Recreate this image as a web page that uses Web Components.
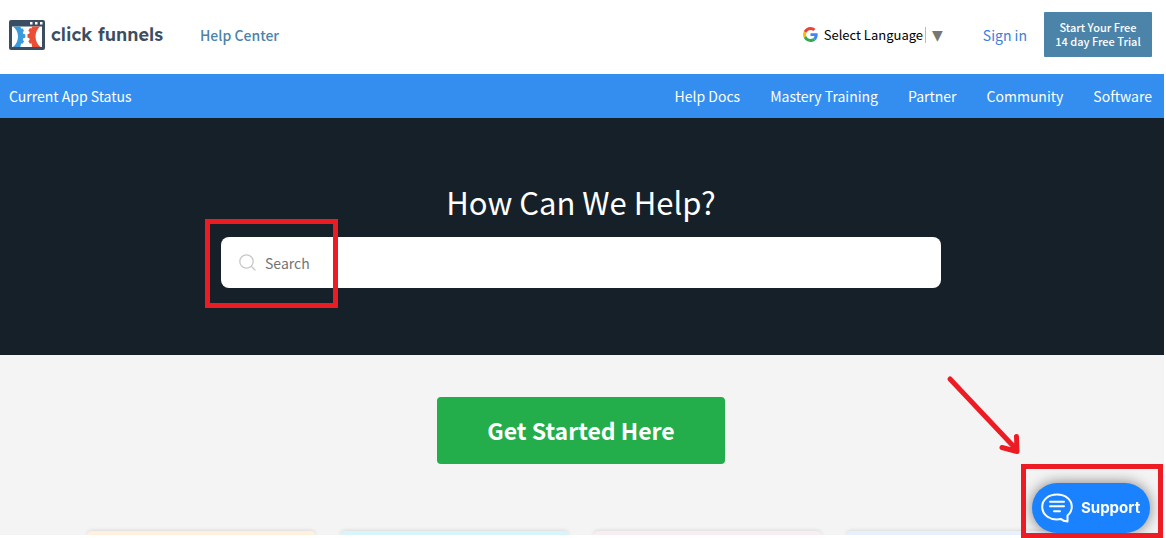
<!DOCTYPE html>
<html lang="en">
<head>
<meta charset="utf-8">
<title>ClickFunnels Help Center</title>
<style>
html, body { margin: 0; background: #fff; }
body { font-family: "Noto Sans CJK SC", "Noto Sans", sans-serif; }
</style>
</head>
<body>
<help-page></help-page>
<script>
const define = (name, html) => customElements.define(name, class extends HTMLElement {
  constructor() {
    super();
    const t = document.createElement('template');
    t.innerHTML = html;
    this.attachShadow({ mode: 'open' }).append(t.content.cloneNode(true));
  }
});

define('brand-logo', `
<style>
:host { display: block; }
a { display: flex; align-items: center; gap: 6px; color: #3b4d61; text-decoration: none; font: 600 18px/24px Lexend, Quicksand, Inter, sans-serif; }
svg { display: block; }
</style>
<a href="#">
<svg width="36" height="30" viewBox="0 0 36 30" aria-hidden="true">
<rect width="36" height="30" rx="2" fill="#3b4d61"/>
<path d="M3 6.500h30V27H3z" fill="#fff"/>
<path d="M21 2h2.500v2.500H21zM26 2h2.500v2.500H26zM31 2h2.500v2.500H31z" fill="#fff"/>
<path d="M4.500 6.500h7l.5 2.200 1.600-.4 1.500 2.600-1.300 1.200.5 1.800 2 .3v3.600l-2 .4-.5 1.800 1.300 1.200-1.500 2.600-1.600-.4-.6 3.600h-7.400c3-2.600 5-6 5-10.500s-2-7.500-5-10z" fill="#3a9bdc"/>
<path d="M31 6.500h-8l-.5 2-1.600-.4-1.600 2.600 1.400 1.400-.5 1.700-1.700.3v3.600l1.700.4.5 1.700-1.400 1.400 1.600 2.500 1.600-.4.7 3.700H31.500c-3-2.600-5-6-5-10.500s2-7.500 4.500-10z" fill="#ea4e35"/>
</svg>
<span>click funnels</span></a>`);

define('language-picker', `
<style>
:host { display: flex; align-items: center; font-size: 13px; line-height: 16px; color: #000; }
svg { margin-right: 6px; }
select { appearance: none; border: 0; border-right: 1px solid #bbb; margin: 0; padding: 0 2px 0 0; background: none; color: inherit; font: inherit; field-sizing: content; }
span { color: #767676; font: 14px/16px "DejaVu Sans", sans-serif; margin-left: 6px; pointer-events: none; }
</style>
<svg width="15" height="15" viewBox="0 0 48 48" aria-hidden="true">
<path fill="#EA4335" d="M24 9.500c3.540 0 6.710 1.220 9.210 3.600l6.850-6.850C35.900 2.380 30.470 0 24 0 14.620 0 6.510 5.380 2.560 13.220l7.980 6.190C12.430 13.720 17.740 9.500 24 9.500z"/>
<path fill="#4285F4" d="M46.980 24.550c0-1.570-.15-3.090-.38-4.550H24v9.020h12.940c-.58 2.960-2.260 5.480-4.780 7.180l7.730 6c4.510-4.180 7.090-10.360 7.090-17.650z"/>
<path fill="#FBBC05" d="M10.530 28.590A14.500 14.500 0 0 1 9.770 24c0-1.600.28-3.140.76-4.590l-7.980-6.190A23.900 23.900 0 0 0 0 24c0 3.880.92 7.540 2.560 10.780l7.970-6.190z"/>
<path fill="#34A853" d="M24 48c6.480 0 11.930-2.130 15.890-5.810l-7.730-6C30.010 37.640 27.240 38.490 24 38.490c-6.260 0-11.570-4.220-13.470-9.910l-7.980 6.190C6.510 42.620 14.620 48 24 48z"/>
</svg>
<select aria-label="Select Language"><option>Select Language</option></select><span aria-hidden="true">▼</span>`);

define('site-header', `
<style>
:host { display: flex; align-items: center; box-sizing: border-box; padding: 12px 12px 17px 9px; }
.help { margin-left: 37px; color: #4b83a9; font-weight: 500; font-size: 14px; line-height: 20px; text-decoration: none; }
language-picker { margin-left: auto; }
.signin { margin: 0 17px 0 40px; color: #3b7edb; font-size: 14px; line-height: 20px; text-decoration: none; }
button { border: 0; border-radius: 1px; background: #4b83a9; color: #fff; font: 500 11px/14px "Noto Sans CJK SC", sans-serif; width: 108px; padding: 8px 0 9px; }
</style>
<brand-logo></brand-logo>
<a class="help" href="#">Help Center</a>
<language-picker></language-picker>
<a class="signin" href="#">Sign in</a>
<button>Start Your Free<br>14 day Free Trial</button>`);

define('nav-bar', `
<style>
:host { display: flex; justify-content: space-between; padding: 11px 12px 11px 9px; background: #348eef; font-size: 14px; line-height: 22px; }
nav { display: flex; gap: 30px; }
::slotted(a) { color: #fff; text-decoration: none; }
</style>
<slot name="status"></slot><nav><slot></slot></nav>`);

define('search-hero', `
<style>
:host { display: block; padding: 60px 2px 67px 0; background: #162029; color: #fff; }
h1 { margin: 0 0 11px; text-align: center; font-weight: 400; font-size: 31px; line-height: 48px; }
.box { position: relative; display: flex; align-items: center; gap: 9px; max-width: 720px; box-sizing: border-box; margin: 0 auto; padding: 0 18px; background: #fff; border-radius: 8px; }
.box svg { flex: none; }
input { flex: 1; min-width: 0; box-sizing: border-box; border: 0; outline: 0; padding: 15px 0; height: 51px; background: none; font: 14px/21px "Noto Sans CJK SC", sans-serif; color: #333; }
input::placeholder { color: #737373; }
.mark { position: absolute; left: -16px; top: -18px; width: 123px; height: 79px; border: 5px solid #ed1c24; pointer-events: none; }
</style>
<h1>How Can We Help?</h1>
<div class="box">
<svg width="17" height="17" viewBox="0 0 17 17" fill="none" stroke="#c8c8c8" stroke-width="1.300" stroke-linecap="round" aria-hidden="true"><circle cx="7.500" cy="7.500" r="6.700"/><path d="M12.500 12.500l3.500 3.500"/></svg>
<input type="search" placeholder="Search" aria-label="Search">
<div class="mark"></div>
</div>`);

define('topic-section', `
<style>
:host { display: block; padding: 42px 2px 0 0; background: #f4f4f4; overflow: hidden; }
button { display: block; margin: 0 auto 67px; width: 288px; padding: 14px 0 15px; border: 0; border-radius: 4px; background: #23ae4b; color: #fff; font: 700 23px/38px "Noto Sans CJK SC", sans-serif; }
.cards { display: grid; grid-template-columns: repeat(4, 1fr); gap: 26px; max-width: 986px; margin: 0 auto; }
.cards div { height: 4px; border-radius: 5px 5px 0 0; box-shadow: 0 0 4px rgba(0,0,0,.16); }
.a { background: #fff1de; } .b { background: #d9f5fc; } .c { background: #f8eef1; } .d { background: #e7f1fe; }
</style>
<button>Get Started Here</button>
<div class="cards"><div class="a"></div><div class="b"></div><div class="c"></div><div class="d"></div></div>`);

define('support-widget', `
<style>
:host { position: fixed; right: 3px; bottom: 0; display: block; box-sizing: border-box; width: 142px; border: 5px solid #ed1c24; }
.clip { overflow: hidden; padding: 14px 4px 0 6px; }
button { display: flex; align-items: center; gap: 8px; width: 118px; height: 50px; padding: 0 0 0 9px; border: 0; border-radius: 25px; background: #1b82ff; color: #fff; font: 700 15px/20px Inter, sans-serif; box-shadow: 0 0 14px rgba(0,0,0,.5); }
.arrow { position: absolute; right: 136px; bottom: 78px; }
</style>
<div class="clip"><button>
<svg width="32" height="30" viewBox="0 0 32 30" fill="none" stroke="#fff" stroke-width="2" stroke-linecap="round" stroke-linejoin="round" aria-hidden="true"><path d="M26.500 28.500c-2.500-.2-5-1-6.500-2.500C9 28 1.200 22 1.200 13.800 1.200 6.500 7.500 1.500 16 1.500s14.800 5 14.800 12.300c0 4-1.600 6.500-4.300 8.700z"/><path d="M9 8.700h14M9 13.200h14M13 18.200h6"/></svg>
Support</button></div>
<svg class="arrow" width="76" height="80" viewBox="0 0 76 80" fill="none" stroke="#ed1c24" stroke-width="5" stroke-linecap="round" aria-hidden="true"><path d="M4 4L71 75M70.500 61.500L71 76M56 72.500l15 4"/></svg>`);

define('help-page', `
<style>
:host { display: block; padding-right: 2px; }
</style>
<site-header></site-header>
<nav-bar><a slot="status" href="#">Current App Status</a><a href="#">Help Docs</a><a href="#">Mastery Training</a><a href="#">Partner</a><a href="#">Community</a><a href="#">Software</a></nav-bar>
<search-hero></search-hero>
<topic-section></topic-section>
<support-widget></support-widget>`);
</script>
</body>
</html>
